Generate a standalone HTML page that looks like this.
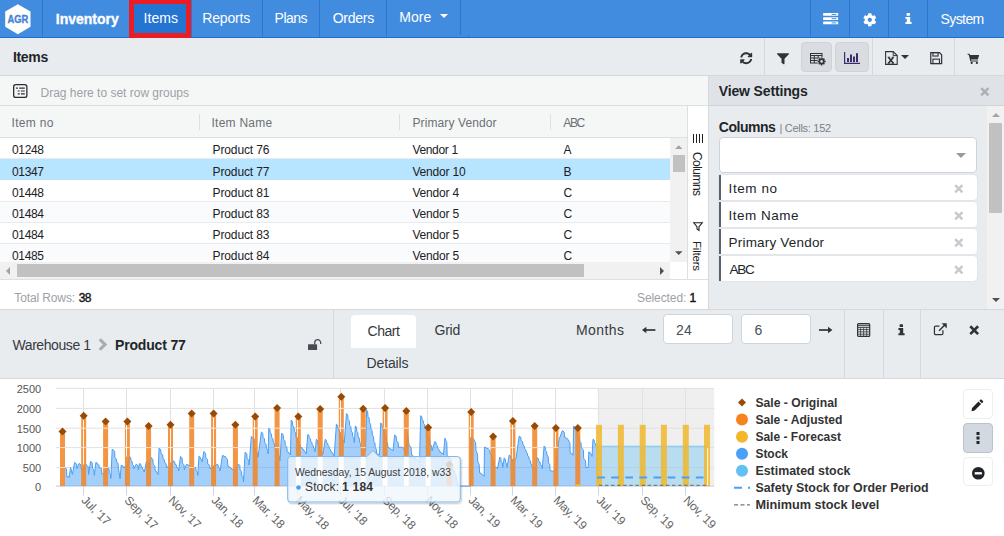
<!DOCTYPE html>
<html lang="en"><head><meta charset="utf-8"><title>Inventory - Items</title>
<style>
html,body{margin:0;padding:0}
body{width:1004px;height:536px;overflow:hidden;background:#fff;font-family:"Liberation Sans",sans-serif;}
.root,.root div{position:absolute;}
.root{position:relative;}
.t{position:absolute;white-space:nowrap;line-height:20px;}
svg{display:block;overflow:visible}
</style></head>
<body>
<div class="root" style="left:0px;top:0px;width:1004px;height:536px;background:#fff;overflow:hidden;"><div class="nav" style="left:0px;top:0px;width:1004px;height:38px;background:#428ce0;border-bottom:1px solid #1f6cd2;box-sizing:border-box;"><div style="left:4.7px;top:3.7px"><svg width="26" height="31" viewBox="0 0 26 31" style="position:absolute;left:0;top:0"><polygon points="12.900,0.200 25.500,7.600 25.500,22.800 12.900,30.300 0.200,22.800 0.200,7.600" fill="#fff"/><text x="12.900" y="18.950" text-anchor="middle" font-family="Liberation Sans, sans-serif" font-weight="700" font-size="10.400" fill="#4583d8" stroke="#4583d8" stroke-width="0.350" textLength="20.800" lengthAdjust="spacingAndGlyphs">AGR</text></svg></div><div style="left:42px;top:0px;width:1px;height:37px;background:#2d74d3;"></div>
<div style="left:191px;top:0px;width:1px;height:37px;background:#2d74d3;"></div>
<div style="left:262px;top:0px;width:1px;height:37px;background:#2d74d3;"></div>
<div style="left:319px;top:0px;width:1px;height:37px;background:#2d74d3;"></div>
<div style="left:386px;top:0px;width:1px;height:37px;background:#2d74d3;"></div>
<div style="left:460px;top:0px;width:1px;height:34.5px;background:#2d74d3;"></div>
<div style="left:810px;top:0px;width:1px;height:37px;background:#2d74d3;"></div>
<div style="left:849px;top:0px;width:1px;height:37px;background:#2d74d3;"></div>
<div style="left:888px;top:0px;width:1px;height:37px;background:#2d74d3;"></div>
<div style="left:927px;top:0px;width:1px;height:37px;background:#2d74d3;"></div>
<div style="left:468px;top:35px;width:1px;height:2px;background:#2d74d3;"></div>
<span class="t" style="left:55.8px;top:9.15px;font-size:14px;font-weight:700;color:#fff;-webkit-text-stroke:0.35px #fff;">Inventory</span><div style="left:129px;top:-1px;width:62px;height:39px;background:#2474d2;border:5px solid #ec1c24;box-sizing:border-box;"></div>
<span class="t" style="left:143.5px;top:8.15px;font-size:14px;color:#fff;letter-spacing:0.068px;">Items</span><span class="t" style="left:202.3px;top:8.15px;font-size:14px;color:#fff;letter-spacing:-0.187px;">Reports</span><span class="t" style="left:274.6px;top:8.15px;font-size:14px;color:#fff;letter-spacing:-0.505px;">Plans</span><span class="t" style="left:332.7px;top:8.15px;font-size:14px;color:#fff;letter-spacing:-0.257px;">Orders</span><span class="t" style="left:399.2px;top:7.15px;font-size:14px;color:#fff;letter-spacing:0.097px;">More</span><div style="left:440px;top:14px"><svg width="8" height="4" viewBox="0 0 8 4" style="position:absolute;left:0;top:0"><polygon points="0,0 8,0 4,4" fill="#fff"/></svg></div><span class="t" style="left:940.6px;top:9.15px;font-size:14px;color:#fff;letter-spacing:-0.603px;">System</span><div style="left:822.5px;top:13px"><svg width="15.3" height="11.3" viewBox="0 0 16 12" style="position:absolute;left:0;top:0"><rect x="0" y="0" width="16" height="3" rx="0.6" fill="#fff"/><rect x="0" y="4.5" width="16" height="3" rx="0.6" fill="#fff"/><rect x="0" y="9" width="16" height="3" rx="0.6" fill="#fff"/><rect x="9" y="1" width="5" height="1" fill="#408ade"/><rect x="9" y="5.5" width="5" height="1" fill="#408ade"/><rect x="9" y="10" width="5" height="1" fill="#408ade"/></svg></div><div style="left:862.7px;top:12.7px"><svg width="13.6" height="13.6" viewBox="0 0 512 512" style="position:absolute;left:0;top:0"><path d="M487.4 315.7l-42.6-24.6c4.3-23.2 4.3-47 0-70.2l42.6-24.6c4.9-2.8 7.1-8.600 5.500-14-11.100-35.600-30-67.800-54.700-94.600-3.800-4.100-10-5.100-14.800-2.300L380.800 110c-17.900-15.400-38.500-27.300-60.800-35.100V25.800c0-5.600-3.900-10.500-9.400-11.700-36.700-8.200-74.300-7.800-109.200 0-5.500 1.200-9.400 6.100-9.400 11.700V75c-22.200 7.900-42.800 19.800-60.800 35.100L88.700 85.500c-4.900-2.800-11-1.900-14.800 2.300-24.700 26.700-43.600 58.900-54.700 94.600-1.700 5.400.6 11.200 5.500 14L67.300 221c-4.300 23.200-4.300 47 0 70.200l-42.600 24.600c-4.900 2.800-7.100 8.600-5.500 14 11.100 35.600 30 67.800 54.700 94.600 3.800 4.100 10 5.100 14.800 2.300l42.600-24.600c17.900 15.400 38.500 27.300 60.800 35.100v49.200c0 5.600 3.900 10.500 9.400 11.700 36.700 8.200 74.300 7.800 109.200 0 5.500-1.200 9.400-6.100 9.400-11.700v-49.200c22.200-7.900 42.800-19.800 60.800-35.100l42.600 24.600c4.900 2.800 11 1.900 14.800-2.300 24.700-26.700 43.600-58.900 54.700-94.600 1.500-5.500-.7-11.300-5.600-14.100zM256 336c-44.100 0-80-35.900-80-80s35.900-80 80-80 80 35.900 80 80-35.900 80-80 80z" fill="#fff"/></svg></div><div style="left:905.2px;top:13.1px"><svg width="7" height="11" viewBox="0 0 7 11" style="position:absolute;left:0;top:0"><rect x="1.600" y="0" width="3.400" height="2.800" rx="0.500" fill="#fff"/><path d="M0.400 3.900h4.800v5.200h1.400v1.900h-6.200v-1.900h1.400v-3.300h-1.400z" fill="#fff"/></svg></div></div>
<div class="titlebar" style="left:0px;top:38px;width:1004px;height:38px;background:#e9ecef;border-bottom:1px solid #d5d9dd;box-sizing:border-box;"><span class="t" style="left:13px;top:9.15px;font-size:14px;font-weight:700;color:#212529;letter-spacing:-0.347px;">Items</span><div style="left:764px;top:0px;width:1px;height:37px;background:#d5d9dd;"></div>
<div style="left:872px;top:0px;width:1px;height:37px;background:#d5d9dd;"></div>
<div style="left:954px;top:0px;width:1px;height:37px;background:#d5d9dd;"></div>
<div style="left:801px;top:4px;width:30.5px;height:29.5px;background:#d9dde2;border:1px solid #ced3d9;border-radius:4px;box-sizing:border-box;"></div>
<div style="left:835px;top:4px;width:34px;height:29.5px;background:#d9dde2;border:1px solid #ced3d9;border-radius:4px;box-sizing:border-box;"></div>
<div style="left:739.8px;top:13.7px"><svg width="12.4" height="12.4" viewBox="0 0 512 512" style="position:absolute;left:0;top:0"><path fill="#30343a" d="M370.720 133.280C339.458 104.008 298.888 87.962 255.848 88c-77.458.068-144.328 53.178-162.791 126.850-1.344 5.363-6.122 9.150-11.651 9.150H24.103c-7.498 0-13.194-6.807-11.807-14.176C33.933 94.924 134.813 8 256 8c66.448 0 126.791 26.136 171.315 68.685L463.030 40.970C478.149 25.851 504 36.559 504 57.941V192c0 13.255-10.745 24-24 24H345.941c-21.382 0-32.090-25.851-16.971-40.971l41.750-41.749zM32 296h134.059c21.382 0 32.090 25.851 16.971 40.971l-41.750 41.750c31.262 29.273 71.835 45.319 114.876 45.280 77.418-.07 144.315-53.144 162.787-126.849 1.344-5.363 6.122-9.150 11.651-9.150h57.304c7.498 0 13.194 6.807 11.807 14.176C478.067 417.076 377.187 504 256 504c-66.448 0-126.791-26.136-171.315-68.685L48.970 471.030C33.851 486.149 8 475.441 8 454.059V320c0-13.255 10.745-24 24-24z"/></svg></div><div style="left:777.3px;top:14.6px"><svg width="12" height="11.6" viewBox="0 0 12 11" style="position:absolute;left:0;top:0"><path fill="#30343a" d="M0.600 0h10.800c.5 0 .8.600.4 1L7.500 5.500V10.400c0 .5-.5.700-.9.500L4.800 9.600c-.200-.100-.300-.300-.300-.500V5.500L.2 1C-.2.600.100 0 .6 0z"/></svg></div><div style="left:809.8px;top:14.7px"><svg width="16" height="13" viewBox="0 0 16 13" style="position:absolute;left:0;top:0"><g fill="none" stroke="#30343a" stroke-width="1"><rect x="0.500" y="0.500" width="11.500" height="9.500"/><path d="M0.500 2.500h11.500M0.500 5h11.500M0.500 7.500h8M4.300 2.500v7.500M8.200 2.500v5"/></g><circle cx="11.600" cy="8.400" r="4.300" fill="#d9dde2"/><circle cx="11.600" cy="8.400" r="2.200" fill="none" stroke="#30343a" stroke-width="1.700"/><g stroke="#30343a" stroke-width="1.500"><path d="M11.600 4.400v1.400M11.600 11v1.400M7.600 8.400h1.400M14.200 8.400h1.400M8.800 5.600l1 1M13.400 10.200l1 1M8.800 11.200l1-1M13.400 6.600l1-1"/></g></svg></div><div style="left:844px;top:14px"><svg width="16" height="12" viewBox="0 0 16 12" style="position:absolute;left:0;top:0"><path d="M0.600 0v11.300h15.400" fill="none" stroke="#3b2d6b" stroke-width="1.200"/><g fill="#3b2d6b"><rect x="3" y="6" width="2" height="4"/><rect x="6" y="2.500" width="2" height="7.500"/><rect x="9" y="4.500" width="2" height="5.500"/><rect x="12" y="1.200" width="2" height="8.800"/></g></svg></div><div style="left:884.8px;top:12.8px"><svg width="13" height="14" viewBox="0 0 13 14" style="position:absolute;left:0;top:0"><path d="M0.600 0.600h7.600l4 4v8.800h-11.600z" fill="none" stroke="#30343a" stroke-width="1.100"/><path d="M8.200 0.600v4h4" fill="none" stroke="#30343a" stroke-width="1"/><path d="M3.400 6.200l5 6M8.400 6.200l-5 6" stroke="#30343a" stroke-width="1.700"/><path d="M2.600 6.200h2.600M6.600 6.200h2.600M2.600 12.200h2.600M6.600 12.200h2.600" stroke="#30343a" stroke-width="0.800"/></svg></div><div style="left:901.2px;top:17px"><svg width="8" height="4.200" viewBox="0 0 8 4" style="position:absolute;left:0;top:0"><polygon points="0,0 8,0 4,4" fill="#30343a"/></svg></div><div style="left:929.7px;top:14px"><svg width="12.4" height="12.2" viewBox="0 0 13 13" style="position:absolute;left:0;top:0"><path d="M0.700 0.700h9.300l2.300 2.300v9.300h-11.600z" fill="none" stroke="#30343a" stroke-width="1.300"/><rect x="3" y="0.700" width="5.500" height="3.600" fill="none" stroke="#30343a" stroke-width="1.200"/><rect x="3" y="7.600" width="7" height="4.700" fill="none" stroke="#30343a" stroke-width="1.200"/></svg></div><div style="left:967px;top:14.8px"><svg width="13.200" height="11.200" viewBox="0 0 14 13" style="position:absolute;left:0;top:0"><path d="M0 0.800h2.400l.5 1.400h10.600l-1.500 5.300h-7.900l.3 1.200h7.600v1.300h-8.700l-2-7.900h-1.300z" fill="#30343a"/><circle cx="4.800" cy="11.600" r="1.300" fill="#30343a"/><circle cx="10.800" cy="11.600" r="1.300" fill="#30343a"/></svg></div></div>
<div class="grid" style="left:0px;top:76px;width:708px;height:234px;background:#fff;"><div style="left:0px;top:0px;width:708px;height:30px;background:#f5f7f7;border-bottom:1px solid #dcdfe3;box-sizing:border-box;"><div style="left:12.7px;top:7.9px"><svg width="14.5" height="14" viewBox="0 0 14.5 14" style="position:absolute;left:0;top:0"><rect x="0.650" y="0.650" width="13.200" height="12.700" rx="2.200" fill="none" stroke="#2b2f33" stroke-width="1.300"/><path d="M2.900 4.200h2M6.200 4.200h5.600M4.700 7h2M7.900 7h3.900M4.700 9.800h2M7.900 9.800h3.900" stroke="#2b2f33" stroke-width="1.200"/></svg></div><span class="t" style="left:40.5px;top:7.04px;font-size:12px;color:#9da1a6;letter-spacing:-0.009px;">Drag here to set row groups</span></div>
<div style="left:0px;top:30px;width:687px;height:32px;background:#f5f7f7;border-bottom:1px solid #dcdfe3;box-sizing:border-box;"><span class="t" style="left:11.5px;top:7.04px;font-size:12px;color:#6c7075;letter-spacing:0.326px;">Item no</span><span class="t" style="left:211.5px;top:7.04px;font-size:12px;color:#6c7075;letter-spacing:0.249px;">Item Name</span><span class="t" style="left:412.5px;top:7.04px;font-size:12px;color:#6c7075;letter-spacing:0.107px;">Primary Vendor</span><span class="t" style="left:563.3px;top:7.04px;font-size:12px;color:#6c7075;letter-spacing:-1.404px;">ABC</span><div style="left:199px;top:8px;width:1px;height:16px;background:#dcdfe3;"></div>
<div style="left:399px;top:8px;width:1px;height:16px;background:#dcdfe3;"></div>
<div style="left:550px;top:8px;width:1px;height:16px;background:#dcdfe3;"></div>
</div>
<div style="left:0px;top:62px;width:670px;height:124px;overflow:hidden;"><div style="left:0px;top:0px;width:670px;height:21px;background:#fff;border-bottom:1px solid #e8eaed;box-sizing:border-box;"><span class="t" style="left:12px;top:2.04px;font-size:12px;color:#1d2125;letter-spacing:-0.349px;">01248</span><span class="t" style="left:212.5px;top:2.04px;font-size:12px;color:#1d2125;letter-spacing:-0.118px;">Product 76</span><span class="t" style="left:412.4px;top:2.04px;font-size:12px;color:#1d2125;letter-spacing:-0.338px;">Vendor 1</span><span class="t" style="left:563.5px;top:2.04px;font-size:12px;color:#1d2125;">A</span></div>
<div style="left:0px;top:21px;width:670px;height:21px;background:#b7e4ff;border-bottom:1px solid #b7e4ff;box-sizing:border-box;"><span class="t" style="left:12px;top:3.04px;font-size:12px;color:#1d2125;letter-spacing:-0.349px;">01347</span><span class="t" style="left:212.5px;top:3.04px;font-size:12px;color:#1d2125;letter-spacing:-0.118px;">Product 77</span><span class="t" style="left:412.4px;top:3.04px;font-size:12px;color:#1d2125;letter-spacing:-0.193px;">Vendor 10</span><span class="t" style="left:563.5px;top:3.04px;font-size:12px;color:#1d2125;letter-spacing:-2.0px;">B</span></div>
<div style="left:0px;top:42px;width:670px;height:22px;background:#fff;border-bottom:1px solid #e8eaed;box-sizing:border-box;"><span class="t" style="left:12px;top:3.04px;font-size:12px;color:#1d2125;letter-spacing:-0.349px;">01448</span><span class="t" style="left:212.5px;top:3.04px;font-size:12px;color:#1d2125;letter-spacing:-0.118px;">Product 81</span><span class="t" style="left:412.4px;top:3.04px;font-size:12px;color:#1d2125;letter-spacing:-0.195px;">Vendor 4</span><span class="t" style="left:563.5px;top:3.04px;font-size:12px;color:#1d2125;letter-spacing:-2.0px;">C</span></div>
<div style="left:0px;top:64px;width:670px;height:21px;background:#fafbfc;border-bottom:1px solid #e8eaed;box-sizing:border-box;"><span class="t" style="left:12px;top:2.04px;font-size:12px;color:#1d2125;letter-spacing:-0.349px;">01484</span><span class="t" style="left:212.5px;top:2.04px;font-size:12px;color:#1d2125;letter-spacing:-0.118px;">Product 83</span><span class="t" style="left:412.4px;top:2.04px;font-size:12px;color:#1d2125;letter-spacing:-0.195px;">Vendor 5</span><span class="t" style="left:563.5px;top:2.04px;font-size:12px;color:#1d2125;letter-spacing:-2.0px;">C</span></div>
<div style="left:0px;top:85px;width:670px;height:21px;background:#fff;border-bottom:1px solid #e8eaed;box-sizing:border-box;"><span class="t" style="left:12px;top:2.04px;font-size:12px;color:#1d2125;letter-spacing:-0.349px;">01484</span><span class="t" style="left:212.5px;top:2.04px;font-size:12px;color:#1d2125;letter-spacing:-0.118px;">Product 83</span><span class="t" style="left:412.4px;top:2.04px;font-size:12px;color:#1d2125;letter-spacing:-0.195px;">Vendor 5</span><span class="t" style="left:563.5px;top:2.04px;font-size:12px;color:#1d2125;letter-spacing:-2.0px;">C</span></div>
<div style="left:0px;top:106px;width:670px;height:21px;background:#fafbfc;border-bottom:1px solid #e8eaed;box-sizing:border-box;"><span class="t" style="left:12px;top:2.04px;font-size:12px;color:#1d2125;letter-spacing:-0.349px;">01485</span><span class="t" style="left:212.5px;top:2.04px;font-size:12px;color:#1d2125;letter-spacing:-0.118px;">Product 84</span><span class="t" style="left:412.4px;top:2.04px;font-size:12px;color:#1d2125;letter-spacing:-0.195px;">Vendor 5</span><span class="t" style="left:563.5px;top:2.04px;font-size:12px;color:#1d2125;letter-spacing:-2.0px;">C</span></div>
</div>
<div style="left:670px;top:62px;width:17px;height:124px;background:#f1f1f1;"><div style="left:4.8px;top:7px"><svg width="7.5" height="4" viewBox="0 0 8 4" style="position:absolute;left:0;top:0"><polygon points="0,4 8,4 4,0" fill="#a3a3a3"/></svg></div><div style="left:4.8px;top:112.5px"><svg width="7.5" height="4" viewBox="0 0 8 4" style="position:absolute;left:0;top:0"><polygon points="0,0 8,0 4,4" fill="#505050"/></svg></div><div style="left:2.5px;top:17px;width:12px;height:16.5px;background:#c1c1c1;"></div>
</div>
<div style="left:0px;top:186px;width:670px;height:17px;background:#f1f1f1;"><div style="left:5.8px;top:4.6px"><svg width="4" height="8" viewBox="0 0 4 8" style="position:absolute;left:0;top:0"><polygon points="4,0 4,8 0,4" fill="#a3a3a3"/></svg></div><div style="left:660px;top:4.6px"><svg width="4" height="8" viewBox="0 0 4 8" style="position:absolute;left:0;top:0"><polygon points="0,0 0,8 4,4" fill="#505050"/></svg></div><div style="left:16.5px;top:2px;width:567px;height:12.7px;background:#c1c1c1;"></div>
</div>
<div style="left:687px;top:30px;width:21px;height:173px;background:#fff;border-left:1px solid #dcdfe3;box-sizing:border-box;"><div style="left:5px;top:28px"><svg width="11" height="9" viewBox="0 0 11 9" style="position:absolute;left:0;top:0"><path d="M0.500 0v9M3.500 0v9M6.500 0v9M9.500 0v9" stroke="#1d2125" stroke-width="1"/></svg></div><span class="t" style="left:19.06px;top:46.2px;transform-origin:0 0;transform:rotate(90deg);font-size:12px;color:#1d2125;letter-spacing:-0.558px;">Columns</span><div style="left:5px;top:116px"><svg width="10" height="10" viewBox="0 0 11 11" style="position:absolute;left:0;top:0"><path d="M0.800 0.800h9.400l-3.600 4.400v4l-2.200-1.500v-2.500z" fill="none" stroke="#1d2125" stroke-width="1.200"/></svg></div><span class="t" style="left:18.98px;top:134.6px;transform-origin:0 0;transform:rotate(90deg);font-size:11.5px;color:#1d2125;letter-spacing:-0.209px;">Filters</span></div>
<div style="left:0px;top:203px;width:708px;height:31px;background:#fff;border-top:1px solid #dcdfe3;border-bottom:1px solid #d5d9dd;box-sizing:border-box;"><span class="t" style="left:14.3px;top:8.34px;font-size:12px;color:#9da1a6;letter-spacing:-0.119px;">Total Rows:</span><span class="t" style="left:78.7px;top:8.34px;font-size:12px;color:#14181c;-webkit-text-stroke:0.4px #14181c;letter-spacing:-0.6px;">38</span><span class="t" style="left:637px;top:8.34px;font-size:12px;color:#9da1a6;letter-spacing:-0.087px;">Selected:</span><span class="t" style="left:689.5px;top:8.34px;font-size:12px;color:#14181c;letter-spacing:-2.5px;-webkit-text-stroke:0.45px #14181c;">1</span></div>
</div>
<div class="panel" style="left:708px;top:76px;width:296px;height:234px;background:#e9ecef;border-left:1px solid #d5d9dd;border-bottom:1px solid #d5d9dd;box-sizing:border-box;"><div style="left:0px;top:0px;width:295px;height:30px;background:#dfe3e8;border-bottom:1px solid #d0d4d9;box-sizing:border-box;"><span class="t" style="left:9.8px;top:5.35px;font-size:14px;font-weight:700;color:#212529;letter-spacing:-0.148px;">View Settings</span><div style="left:270.6px;top:10.5px"><svg width="9.6" height="9.6" viewBox="0 0 9 9" style="position:absolute;left:0;top:0"><path d="M1.100 1.100l6.800 6.800M7.900 1.100l-6.800 6.800" stroke="#adb1b6" stroke-width="2.300"/></svg></div></div>
<span class="t" style="left:9.8px;top:41.35px;font-size:14px;font-weight:700;color:#212529;letter-spacing:-0.484px;">Columns</span><span class="t" style="left:70.5px;top:42.19px;font-size:11px;color:#7b8085;letter-spacing:-0.292px;">| Cells: 152</span><div style="left:10px;top:61px;width:258px;height:36px;background:#fff;border:1px solid #ced4da;border-radius:4px;box-sizing:border-box;"><div style="left:235.8px;top:15px"><svg width="10" height="5" viewBox="0 0 10 5" style="position:absolute;left:0;top:0"><polygon points="0,0 10,0 5,5" fill="#999"/></svg></div></div>
<div style="left:10px;top:99.2px;width:258px;height:25px;background:#fff;border-left:2px solid #5a636c;border-radius:0 4px 4px 0;box-sizing:border-box;box-shadow:0 0 0 1px #e2e5e9;"><span class="t" style="left:7.6px;top:3.52px;font-size:13.5px;color:#212529;letter-spacing:0.581px;">Item no</span><div style="left:232.6px;top:8.4px"><svg width="9.6" height="9.6" viewBox="0 0 9 9" style="position:absolute;left:0;top:0"><path d="M1.100 1.100l6.800 6.800M7.900 1.100l-6.800 6.800" stroke="#c6c9cd" stroke-width="2.300"/></svg></div></div>
<div style="left:10px;top:126.25px;width:258px;height:25px;background:#fff;border-left:2px solid #5a636c;border-radius:0 4px 4px 0;box-sizing:border-box;box-shadow:0 0 0 1px #e2e5e9;"><span class="t" style="left:7.6px;top:3.52px;font-size:13.5px;color:#212529;letter-spacing:0.499px;">Item Name</span><div style="left:232.6px;top:8.4px"><svg width="9.6" height="9.6" viewBox="0 0 9 9" style="position:absolute;left:0;top:0"><path d="M1.100 1.100l6.800 6.800M7.900 1.100l-6.800 6.800" stroke="#c6c9cd" stroke-width="2.300"/></svg></div></div>
<div style="left:10px;top:153.3px;width:258px;height:25px;background:#fff;border-left:2px solid #5a636c;border-radius:0 4px 4px 0;box-sizing:border-box;box-shadow:0 0 0 1px #e2e5e9;"><span class="t" style="left:7.6px;top:3.52px;font-size:13.5px;color:#212529;letter-spacing:0.189px;">Primary Vendor</span><div style="left:232.6px;top:8.4px"><svg width="9.6" height="9.6" viewBox="0 0 9 9" style="position:absolute;left:0;top:0"><path d="M1.100 1.100l6.800 6.800M7.900 1.100l-6.800 6.800" stroke="#c6c9cd" stroke-width="2.300"/></svg></div></div>
<div style="left:10px;top:180.35px;width:258px;height:25px;background:#fff;border-left:2px solid #5a636c;border-radius:0 4px 4px 0;box-sizing:border-box;box-shadow:0 0 0 1px #e2e5e9;"><span class="t" style="left:8.6px;top:3.52px;font-size:13.5px;color:#212529;letter-spacing:-1.254px;">ABC</span><div style="left:232.6px;top:8.4px"><svg width="9.6" height="9.6" viewBox="0 0 9 9" style="position:absolute;left:0;top:0"><path d="M1.100 1.100l6.800 6.800M7.900 1.100l-6.800 6.800" stroke="#c6c9cd" stroke-width="2.300"/></svg></div></div>
<div style="left:278px;top:30px;width:17px;height:203px;background:#f1f1f1;"><div style="left:4.5px;top:7px"><svg width="8" height="4" viewBox="0 0 8 4" style="position:absolute;left:0;top:0"><polygon points="0,4 8,4 4,0" fill="#a3a3a3"/></svg></div><div style="left:4.5px;top:191.5px"><svg width="8" height="4" viewBox="0 0 8 4" style="position:absolute;left:0;top:0"><polygon points="0,0 8,0 4,4" fill="#505050"/></svg></div><div style="left:2px;top:17px;width:13px;height:89.5px;background:#c1c1c1;"></div>
</div>
</div>
<div class="detailhdr" style="left:0px;top:310px;width:1004px;height:69px;background:#e9ecef;border-bottom:1px solid #d5d9dd;box-sizing:border-box;"><div style="left:333px;top:0px;width:1px;height:69px;background:#d5d9dd;"></div>
<div style="left:844.3px;top:0px;width:1px;height:69px;background:#d5d9dd;"></div>
<div style="left:883px;top:0px;width:1px;height:69px;background:#d5d9dd;"></div>
<div style="left:920px;top:0px;width:1px;height:69px;background:#d5d9dd;"></div>
<span class="t" style="left:12.5px;top:25.45px;font-size:14px;color:#343a40;letter-spacing:-0.426px;">Warehouse 1</span><div style="left:97.8px;top:27.8px"><svg width="8.800" height="13" viewBox="0 0 8 13" preserveAspectRatio="none" style="position:absolute;left:0;top:0"><path d="M1.600 1.200l4.800 5.300-4.800 5.300" fill="none" stroke="#a9adb2" stroke-width="3"/></svg></div><span class="t" style="left:115px;top:25.45px;font-size:14px;font-weight:700;color:#212529;letter-spacing:-0.174px;">Product 77</span><div style="left:307.9px;top:28.7px"><svg width="14" height="12" viewBox="0 0 14 12" style="position:absolute;left:0;top:0"><rect x="0" y="5.300" width="9.100" height="5.800" rx="0.600" fill="#454c54"/><path d="M6.700 5.300v-1.600a3 3 0 0 1 6 0v1.400" fill="none" stroke="#454c54" stroke-width="1.250"/></svg></div><div style="left:350.8px;top:5px;width:65.2px;height:33px;background:#fff;border-radius:4px 4px 0 0;"></div>
<span class="t" style="left:367.5px;top:11.45px;font-size:14px;color:#343a40;letter-spacing:-0.461px;">Chart</span><span class="t" style="left:434.5px;top:10.45px;font-size:14px;color:#343a40;letter-spacing:-0.221px;">Grid</span><span class="t" style="left:366.5px;top:43.45px;font-size:14px;color:#343a40;letter-spacing:-0.132px;">Details</span><span class="t" style="left:576px;top:10.45px;font-size:14px;color:#343a40;letter-spacing:0.418px;">Months</span><div style="left:641.6px;top:16.2px"><svg width="13.4" height="8" viewBox="0 0 13.4 8" style="position:absolute;left:0;top:0;transform:scaleX(-1);"><path d="M0 4h11" fill="none" stroke="#30343a" stroke-width="1.700"/><polygon points="9,0.800 13.400,4 9,7.200" fill="#30343a"/></svg></div><div style="left:819px;top:16.2px"><svg width="13.4" height="8" viewBox="0 0 13.4 8" style="position:absolute;left:0;top:0;"><path d="M0 4h11" fill="none" stroke="#30343a" stroke-width="1.700"/><polygon points="9,0.800 13.400,4 9,7.200" fill="#30343a"/></svg></div><div style="left:663px;top:4px;width:69.5px;height:29.5px;background:#fff;border:1px solid #ced4da;border-radius:4px;box-sizing:border-box;"></div>
<span class="t" style="left:676px;top:10.45px;font-size:14px;color:#495057;letter-spacing:0.214px;">24</span><div style="left:741px;top:4px;width:69.5px;height:29.5px;background:#fff;border:1px solid #ced4da;border-radius:4px;box-sizing:border-box;"></div>
<span class="t" style="left:754.5px;top:10.45px;font-size:14px;color:#495057;letter-spacing:-0.5px;">6</span><div style="left:857px;top:13px"><svg width="13.3" height="14" viewBox="0 0 13.3 14" style="position:absolute;left:0;top:0"><rect x="0.600" y="0.600" width="12.100" height="12.800" rx="1" fill="none" stroke="#30343a" stroke-width="1.200"/><path d="M0.600 2.300h12.100M0.600 4.300h12.100" stroke="#30343a" stroke-width="1"/><path d="M0.600 6.600h12.100M0.600 8.900h12.100M0.600 11.200h12.100M3.600 4.300v9M6.650 4.300v9M9.700 4.300v9" stroke="#30343a" stroke-width="0.800"/></svg></div><div style="left:898.3px;top:13.7px"><svg width="7" height="11.400" viewBox="0 0 7 11" style="position:absolute;left:0;top:0"><rect x="1.600" y="0" width="3.400" height="2.800" rx="0.500" fill="#30343a"/><path d="M0.400 3.900h4.800v5.200h1.400v1.900h-6.200v-1.900h1.400v-3.300h-1.400z" fill="#30343a"/></svg></div><div style="left:932.7px;top:12.8px"><svg width="15" height="12.500" viewBox="0 0 14 13" style="position:absolute;left:0;top:0"><path d="M9.500 7.500v3.300a1.200 1.200 0 0 1-1.200 1.200h-6.400a1.200 1.200 0 0 1-1.200-1.200v-6.400a1.200 1.200 0 0 1 1.200-1.200h4" fill="none" stroke="#30343a" stroke-width="1.300"/><path d="M5.500 8l6.700-6.700" stroke="#30343a" stroke-width="1.600"/><polygon points="8.200,0.300 13.500,0.300 13.500,5.600" fill="#30343a"/></svg></div><div style="left:968.7px;top:15.2px"><svg width="10.4" height="10.4" viewBox="0 0 9 9" style="position:absolute;left:0;top:0"><path d="M1.100 1.100l6.800 6.800M7.900 1.100l-6.800 6.800" stroke="#30343a" stroke-width="2.300"/></svg></div></div>
<div class="chart" style="left:0px;top:379px;width:1004px;height:157px;background:#fff;"><div style="left:0px;top:0px"><svg width="1004" height="157" viewBox="0 379 1004 157" style="position:absolute;left:0;top:0" font-family="Liberation Sans, sans-serif"><rect x="597.8" y="388.4" width="116.400" height="97.700" fill="#efefef"/><path d="M56 486.10H714.200" stroke="#e1e1e1" stroke-width="1"/><path d="M56 467.50H714.200" stroke="#e1e1e1" stroke-width="1"/><path d="M56 447.60H714.200" stroke="#e1e1e1" stroke-width="1"/><path d="M56 428.20H714.200" stroke="#e1e1e1" stroke-width="1"/><path d="M56 408.40H714.200" stroke="#e1e1e1" stroke-width="1"/><path d="M56 388.35H714.200" stroke="#e1e1e1" stroke-width="1"/><path d="M83.5 388.400V486" stroke="#e1e1e1" stroke-width="1"/><path d="M83.5 486V495.500" stroke="#ccd6eb" stroke-width="1"/><path d="M126.5 388.400V486" stroke="#e1e1e1" stroke-width="1"/><path d="M126.5 486V495.500" stroke="#ccd6eb" stroke-width="1"/><path d="M170.5 388.400V486" stroke="#e1e1e1" stroke-width="1"/><path d="M170.5 486V495.500" stroke="#ccd6eb" stroke-width="1"/><path d="M213.5 388.400V486" stroke="#e1e1e1" stroke-width="1"/><path d="M213.5 486V495.500" stroke="#ccd6eb" stroke-width="1"/><path d="M254.5 388.400V486" stroke="#e1e1e1" stroke-width="1"/><path d="M254.5 486V495.500" stroke="#ccd6eb" stroke-width="1"/><path d="M297.5 388.400V486" stroke="#e1e1e1" stroke-width="1"/><path d="M297.5 486V495.500" stroke="#ccd6eb" stroke-width="1"/><path d="M340.5 388.400V486" stroke="#e1e1e1" stroke-width="1"/><path d="M340.5 486V495.500" stroke="#ccd6eb" stroke-width="1"/><path d="M384.5 388.400V486" stroke="#e1e1e1" stroke-width="1"/><path d="M384.5 486V495.500" stroke="#ccd6eb" stroke-width="1"/><path d="M427.5 388.400V486" stroke="#e1e1e1" stroke-width="1"/><path d="M427.5 486V495.500" stroke="#ccd6eb" stroke-width="1"/><path d="M470.5 388.400V486" stroke="#e1e1e1" stroke-width="1"/><path d="M470.5 486V495.500" stroke="#ccd6eb" stroke-width="1"/><path d="M512.5 388.400V486" stroke="#e1e1e1" stroke-width="1"/><path d="M512.5 486V495.500" stroke="#ccd6eb" stroke-width="1"/><path d="M555.5 388.400V486" stroke="#e1e1e1" stroke-width="1"/><path d="M555.5 486V495.500" stroke="#ccd6eb" stroke-width="1"/><path d="M598.5 388.400V486" stroke="#e1e1e1" stroke-width="1"/><path d="M598.5 486V495.500" stroke="#ccd6eb" stroke-width="1"/><path d="M642.5 388.400V486" stroke="#e1e1e1" stroke-width="1"/><path d="M642.5 486V495.500" stroke="#ccd6eb" stroke-width="1"/><path d="M685.5 388.400V486" stroke="#e1e1e1" stroke-width="1"/><path d="M685.5 486V495.500" stroke="#ccd6eb" stroke-width="1"/><path d="M56 486.100H714.200" stroke="#ccd6eb" stroke-width="1"/><path d="M64.6 467.5L66.5 469.0L66.8 476.5L68.7 476.8L69.0 477.7L70.6 467.5L72.4 474.4L74.6 462.4L76.6 464.0L76.9 468.7L79.1 463.4L81.0 465.0L81.3 469.7L83.5 468.5L85.8 464.2L88.2 466.7L88.5 474.4L90.7 461.3L92.2 463.0L92.5 468.3L94.0 470.1L94.3 475.3L95.9 462.4L97.2 463.0L97.6 464.5L98.9 465.0L99.2 467.5L101.6 468.5L101.9 474.4L104.0 473.2L105.5 470.5L107.8 467.5L109.0 468.9L109.3 472.9L110.6 474.2L110.9 478.3L112.2 449.2L114.6 451.3L114.9 457.6L116.2 458.7L116.6 462.1L118.0 463.2L118.3 467.5L120.1 478.7L121.2 465.4L122.8 465.7L123.1 467.5L124.7 466.8L125.0 467.7L127.2 465.8L129.5 456.4L130.6 457.4L131.0 460.5L132.1 461.5L132.4 464.6L133.6 465.6L133.9 468.7L136.2 464.2L138.1 465.6L138.4 469.9L139.5 463.4L140.7 464.1L141.0 466.3L142.2 467.0L142.5 469.2L143.7 469.9L144.0 472.0L145.1 468.7L146.3 461.9L148.7 463.0L149.0 467.5L151.2 457.6L152.8 459.2L153.2 464.2L154.8 465.9L155.2 470.9L156.3 471.3L156.6 472.6L157.8 473.1L158.1 474.4L159.0 448.2L160.7 449.5L161.0 453.5L162.7 454.8L163.0 458.7L164.3 459.7L164.7 462.6L166.1 463.6L166.4 467.5L168.0 466.7L168.3 467.1L169.8 467.3L170.2 467.7L173.1 460.9L174.6 461.7L175.0 464.2L176.5 465.0L176.8 467.5L178.3 468.4L178.7 470.9L180.5 456.4L182.1 458.1L182.4 463.1L184.0 464.8L184.3 469.9L186.6 464.2L187.7 464.5L188.1 465.2L189.2 465.5L189.5 466.3L190.7 467.5L191.0 467.3L194.4 467.5L195.8 467.6L196.1 470.9L197.5 472.0L197.8 475.3L198.9 456.4L200.2 457.1L200.6 459.1L201.8 459.8L202.2 461.9L203.8 451.5L205.5 453.1L205.8 457.9L207.5 459.4L207.8 464.2L209.7 465.3L210.0 468.7L213.0 467.7L216.8 464.2L218.1 465.0L218.4 467.5L219.8 468.4L220.1 470.9L222.4 455.6L223.8 455.8L224.1 456.5L225.5 456.7L225.8 457.4L227.5 459.6L227.8 466.2L229.0 466.4L229.3 467.3L230.5 467.5L230.8 468.4L232.0 468.7L232.3 469.5L233.4 469.6L233.8 470.0L234.8 470.1L235.2 470.5L238.4 464.0L239.8 465.5L240.1 469.9L241.5 471.4L241.8 475.9L243.2 477.4L243.5 481.8L245.1 452.1L246.8 453.7L247.1 458.5L248.8 460.1L249.1 465.0L251.3 436.4L253.7 439.1L254.0 447.6L255.7 448.3L256.0 452.1L257.6 453.4L258.0 457.2L261.4 431.9L262.7 433.3L263.1 437.4L264.4 438.8L264.8 442.9L266.1 444.3L266.4 448.4L267.8 449.7L268.1 453.8L268.8 428.2L269.9 429.4L270.3 432.9L271.4 434.1L271.8 437.6L272.9 438.8L273.3 442.3L274.4 443.5L274.8 447.6L276.0 448.0L276.4 450.9L277.6 451.9L277.9 454.8L279.1 455.8L279.5 458.7L280.0 460.7L281.6 433.1L283.1 434.7L283.5 439.3L285.0 440.9L285.3 445.5L286.8 447.0L287.2 451.7L288.5 452.1L288.9 453.3L290.1 453.6L290.5 454.8L291.2 420.0L292.4 421.5L292.8 425.8L294.0 427.2L294.4 431.5L295.6 432.9L296.0 437.2L297.2 438.0L297.5 440.5L298.7 441.3L299.1 443.7L300.2 444.6L300.6 447.6L302.1 447.6L302.5 449.3L304.0 449.9L304.3 451.7L305.8 452.3L306.2 454.0L307.8 434.5L308.9 435.3L309.3 437.9L310.4 438.8L310.7 441.4L311.8 442.2L312.2 444.8L313.3 445.7L313.6 448.3L314.8 449.1L315.1 451.7L316.3 439.4L317.8 440.8L318.1 445.1L319.6 446.6L320.0 450.9L321.1 451.3L321.5 452.5L322.6 452.9L323.0 454.0L325.2 439.4L326.2 440.1L326.6 442.5L327.6 443.2L328.0 445.5L329.0 446.3L329.4 448.6L330.4 449.4L330.8 451.7L332.1 452.2L332.5 453.8L333.8 454.4L334.2 456.0L336.4 424.1L337.5 425.2L337.9 428.5L339.0 429.6L339.4 432.9L340.5 434.0L340.9 437.2L342.2 438.0L342.5 440.2L343.8 440.9L344.2 443.1L346.5 413.6L347.7 415.0L348.1 419.4L349.3 420.9L349.6 425.2L350.8 426.7L351.2 431.0L352.4 432.5L352.7 436.9L353.9 438.3L354.3 442.7L355.4 425.9L356.4 427.2L356.8 431.3L357.8 432.6L358.2 436.6L359.2 438.0L359.6 442.0L360.6 443.4L361.0 447.4L362.1 447.7L362.5 448.6L363.6 448.9L364.0 449.7L365.1 450.0L365.5 450.9L366.6 410.2L367.7 411.8L368.0 416.5L369.1 418.0L369.5 422.7L370.6 424.3L370.9 428.9L372.0 430.5L372.4 435.2L373.5 436.7L373.8 441.4L374.9 442.9L375.3 447.6L376.3 449.2L376.7 453.8L377.8 454.0L378.1 454.3L379.1 454.5L379.5 454.8L380.7 423.0L381.8 424.0L382.1 427.1L383.2 428.1L383.6 431.2L384.6 432.2L385.0 435.3L386.1 436.8L386.4 441.3L387.5 442.8L387.9 447.4L389.2 447.7L389.6 448.6L390.9 448.9L391.3 449.7L392.6 450.0L393.0 450.9L394.6 434.9L396.2 436.4L396.6 440.9L398.1 442.5L398.5 447.6L400.1 447.0L400.4 447.2L402.0 447.2L402.4 447.4L403.8 448.1L404.2 450.1L405.6 450.8L406.0 452.9L407.4 432.7L409.0 445.0L411.1 447.5L411.5 454.8L412.7 455.2L413.0 456.3L414.2 456.7L414.6 457.8L415.7 458.1L416.1 459.2L417.2 459.6L417.6 460.7L419.5 462.6L420.7 415.7L421.8 416.7L422.1 419.6L423.2 420.6L423.6 423.5L424.6 424.5L425.0 428.2L426.2 428.7L426.6 432.3L427.8 433.6L428.1 437.2L429.7 438.9L430.1 444.1L431.6 445.8L432.0 450.9L434.8 441.5L435.9 442.4L436.3 444.9L437.4 445.8L437.8 448.3L438.9 449.2L439.3 451.7L441.0 452.1L441.4 453.3L443.1 453.6L443.5 454.8L444.9 438.2L446.8 442.7L447.2 456.4L448.2 456.7L448.6 457.6L449.6 457.9L450.0 458.7L451.1 460.2L451.5 464.6L452.6 466.1L453.0 470.5L454.6 471.4L455.0 474.4L456.1 475.8L456.5 480.2L457.6 481.7L458.0 486.1L470.5 486.1L471.1 437.2L472.2 437.6L472.6 438.6L473.6 438.9L474.0 440.0L475.6 442.7L476.0 450.9L477.4 453.6L477.8 461.9L479.2 464.6L479.6 472.8L480.8 473.1L481.1 474.0L482.2 474.3L482.6 475.2L483.8 475.4L484.1 476.3L484.5 447.2L486.1 447.5L486.5 448.3L488.1 448.5L488.5 449.3L489.9 450.5L490.2 453.8L491.6 455.0L492.0 458.3L493.6 460.4L494.0 467.5L495.4 466.8L495.8 467.5L497.1 467.8L497.5 468.5L499.8 457.2L500.9 458.3L501.2 461.9L502.3 463.0L502.7 467.5L504.2 457.8L505.2 458.9L505.6 462.5L506.6 463.7L507.0 467.3L509.2 455.0L510.2 455.9L510.6 458.4L511.6 459.3L512.0 461.9L516.0 458.7L519.2 436.1L520.8 437.2L521.1 440.5L522.6 441.7L523.0 445.0L524.2 446.0L524.6 448.7L525.8 449.6L526.2 452.3L527.4 453.3L527.8 456.0L528.9 456.9L529.3 459.8L530.4 460.7L530.7 463.6L531.9 464.5L532.2 467.3L533.8 467.5L534.1 467.9L535.6 468.1L536.0 468.5L536.7 457.6L538.2 458.5L538.6 461.2L540.1 462.1L540.4 464.9L541.9 465.8L542.3 468.5L544.1 446.0L545.2 447.1L545.5 450.4L546.6 451.5L547.0 454.8L548.2 456.8L548.5 462.7L549.8 464.7L550.1 470.7L551.4 470.8L551.8 471.1L553.1 471.3L553.5 471.6L556.0 467.5L557.5 450.9L559.0 439.6L562.4 430.6L564.2 432.2L564.6 437.2L565.9 437.5L566.3 438.4L567.6 438.7L568.0 439.6L569.9 442.9L570.2 452.9L571.3 453.2L571.7 454.0L572.8 454.3L573.1 455.2L573.6 426.1L574.7 426.8L575.1 429.1L576.2 429.9L576.5 432.2L577.6 433.0L578.0 435.3L579.4 436.8L579.7 441.3L581.0 442.8L581.4 447.4L583.4 450.2L583.7 458.7L585.5 460.7L585.9 467.5L588.2 467.5L588.8 451.9L590.0 452.4L590.4 454.1L591.6 454.7L592.0 456.4L593.0 439.2L594.1 440.1L594.5 442.7L595.6 443.6L596.0 446.2L598.2 446.0L598.2 486.100L64.6 486.100Z" fill="#4a9ff5" fill-opacity="0.5"/><path d="M64.6 467.5L66.5 469.0L66.8 476.5L68.7 476.8L69.0 477.7L70.6 467.5L72.4 474.4L74.6 462.4L76.6 464.0L76.9 468.7L79.1 463.4L81.0 465.0L81.3 469.7L83.5 468.5L85.8 464.2L88.2 466.7L88.5 474.4L90.7 461.3L92.2 463.0L92.5 468.3L94.0 470.1L94.3 475.3L95.9 462.4L97.2 463.0L97.6 464.5L98.9 465.0L99.2 467.5L101.6 468.5L101.9 474.4L104.0 473.2L105.5 470.5L107.8 467.5L109.0 468.9L109.3 472.9L110.6 474.2L110.9 478.3L112.2 449.2L114.6 451.3L114.9 457.6L116.2 458.7L116.6 462.1L118.0 463.2L118.3 467.5L120.1 478.7L121.2 465.4L122.8 465.7L123.1 467.5L124.7 466.8L125.0 467.7L127.2 465.8L129.5 456.4L130.6 457.4L131.0 460.5L132.1 461.5L132.4 464.6L133.6 465.6L133.9 468.7L136.2 464.2L138.1 465.6L138.4 469.9L139.5 463.4L140.7 464.1L141.0 466.3L142.2 467.0L142.5 469.2L143.7 469.9L144.0 472.0L145.1 468.7L146.3 461.9L148.7 463.0L149.0 467.5L151.2 457.6L152.8 459.2L153.2 464.2L154.8 465.9L155.2 470.9L156.3 471.3L156.6 472.6L157.8 473.1L158.1 474.4L159.0 448.2L160.7 449.5L161.0 453.5L162.7 454.8L163.0 458.7L164.3 459.7L164.7 462.6L166.1 463.6L166.4 467.5L168.0 466.7L168.3 467.1L169.8 467.3L170.2 467.7L173.1 460.9L174.6 461.7L175.0 464.2L176.5 465.0L176.8 467.5L178.3 468.4L178.7 470.9L180.5 456.4L182.1 458.1L182.4 463.1L184.0 464.8L184.3 469.9L186.6 464.2L187.7 464.5L188.1 465.2L189.2 465.5L189.5 466.3L190.7 467.5L191.0 467.3L194.4 467.5L195.8 467.6L196.1 470.9L197.5 472.0L197.8 475.3L198.9 456.4L200.2 457.1L200.6 459.1L201.8 459.8L202.2 461.9L203.8 451.5L205.5 453.1L205.8 457.9L207.5 459.4L207.8 464.2L209.7 465.3L210.0 468.7L213.0 467.7L216.8 464.2L218.1 465.0L218.4 467.5L219.8 468.4L220.1 470.9L222.4 455.6L223.8 455.8L224.1 456.5L225.5 456.7L225.8 457.4L227.5 459.6L227.8 466.2L229.0 466.4L229.3 467.3L230.5 467.5L230.8 468.4L232.0 468.7L232.3 469.5L233.4 469.6L233.8 470.0L234.8 470.1L235.2 470.5L238.4 464.0L239.8 465.5L240.1 469.9L241.5 471.4L241.8 475.9L243.2 477.4L243.5 481.8L245.1 452.1L246.8 453.7L247.1 458.5L248.8 460.1L249.1 465.0L251.3 436.4L253.7 439.1L254.0 447.6L255.7 448.3L256.0 452.1L257.6 453.4L258.0 457.2L261.4 431.9L262.7 433.3L263.1 437.4L264.4 438.8L264.8 442.9L266.1 444.3L266.4 448.4L267.8 449.7L268.1 453.8L268.8 428.2L269.9 429.4L270.3 432.9L271.4 434.1L271.8 437.6L272.9 438.8L273.3 442.3L274.4 443.5L274.8 447.6L276.0 448.0L276.4 450.9L277.6 451.9L277.9 454.8L279.1 455.8L279.5 458.7L280.0 460.7L281.6 433.1L283.1 434.7L283.5 439.3L285.0 440.9L285.3 445.5L286.8 447.0L287.2 451.7L288.5 452.1L288.9 453.3L290.1 453.6L290.5 454.8L291.2 420.0L292.4 421.5L292.8 425.8L294.0 427.2L294.4 431.5L295.6 432.9L296.0 437.2L297.2 438.0L297.5 440.5L298.7 441.3L299.1 443.7L300.2 444.6L300.6 447.6L302.1 447.6L302.5 449.3L304.0 449.9L304.3 451.7L305.8 452.3L306.2 454.0L307.8 434.5L308.9 435.3L309.3 437.9L310.4 438.8L310.7 441.4L311.8 442.2L312.2 444.8L313.3 445.7L313.6 448.3L314.8 449.1L315.1 451.7L316.3 439.4L317.8 440.8L318.1 445.1L319.6 446.6L320.0 450.9L321.1 451.3L321.5 452.5L322.6 452.9L323.0 454.0L325.2 439.4L326.2 440.1L326.6 442.5L327.6 443.2L328.0 445.5L329.0 446.3L329.4 448.6L330.4 449.4L330.8 451.7L332.1 452.2L332.5 453.8L333.8 454.4L334.2 456.0L336.4 424.1L337.5 425.2L337.9 428.5L339.0 429.6L339.4 432.9L340.5 434.0L340.9 437.2L342.2 438.0L342.5 440.2L343.8 440.9L344.2 443.1L346.5 413.6L347.7 415.0L348.1 419.4L349.3 420.9L349.6 425.2L350.8 426.7L351.2 431.0L352.4 432.5L352.7 436.9L353.9 438.3L354.3 442.7L355.4 425.9L356.4 427.2L356.8 431.3L357.8 432.6L358.2 436.6L359.2 438.0L359.6 442.0L360.6 443.4L361.0 447.4L362.1 447.7L362.5 448.6L363.6 448.9L364.0 449.7L365.1 450.0L365.5 450.9L366.6 410.2L367.7 411.8L368.0 416.5L369.1 418.0L369.5 422.7L370.6 424.3L370.9 428.9L372.0 430.5L372.4 435.2L373.5 436.7L373.8 441.4L374.9 442.9L375.3 447.6L376.3 449.2L376.7 453.8L377.8 454.0L378.1 454.3L379.1 454.5L379.5 454.8L380.7 423.0L381.8 424.0L382.1 427.1L383.2 428.1L383.6 431.2L384.6 432.2L385.0 435.3L386.1 436.8L386.4 441.3L387.5 442.8L387.9 447.4L389.2 447.7L389.6 448.6L390.9 448.9L391.3 449.7L392.6 450.0L393.0 450.9L394.6 434.9L396.2 436.4L396.6 440.9L398.1 442.5L398.5 447.6L400.1 447.0L400.4 447.2L402.0 447.2L402.4 447.4L403.8 448.1L404.2 450.1L405.6 450.8L406.0 452.9L407.4 432.7L409.0 445.0L411.1 447.5L411.5 454.8L412.7 455.2L413.0 456.3L414.2 456.7L414.6 457.8L415.7 458.1L416.1 459.2L417.2 459.6L417.6 460.7L419.5 462.6L420.7 415.7L421.8 416.7L422.1 419.6L423.2 420.6L423.6 423.5L424.6 424.5L425.0 428.2L426.2 428.7L426.6 432.3L427.8 433.6L428.1 437.2L429.7 438.9L430.1 444.1L431.6 445.8L432.0 450.9L434.8 441.5L435.9 442.4L436.3 444.9L437.4 445.8L437.8 448.3L438.9 449.2L439.3 451.7L441.0 452.1L441.4 453.3L443.1 453.6L443.5 454.8L444.9 438.2L446.8 442.7L447.2 456.4L448.2 456.7L448.6 457.6L449.6 457.9L450.0 458.7L451.1 460.2L451.5 464.6L452.6 466.1L453.0 470.5L454.6 471.4L455.0 474.4L456.1 475.8L456.5 480.2L457.6 481.7L458.0 486.1L470.5 486.1L471.1 437.2L472.2 437.6L472.6 438.6L473.6 438.9L474.0 440.0L475.6 442.7L476.0 450.9L477.4 453.6L477.8 461.9L479.2 464.6L479.6 472.8L480.8 473.1L481.1 474.0L482.2 474.3L482.6 475.2L483.8 475.4L484.1 476.3L484.5 447.2L486.1 447.5L486.5 448.3L488.1 448.5L488.5 449.3L489.9 450.5L490.2 453.8L491.6 455.0L492.0 458.3L493.6 460.4L494.0 467.5L495.4 466.8L495.8 467.5L497.1 467.8L497.5 468.5L499.8 457.2L500.9 458.3L501.2 461.9L502.3 463.0L502.7 467.5L504.2 457.8L505.2 458.9L505.6 462.5L506.6 463.7L507.0 467.3L509.2 455.0L510.2 455.9L510.6 458.4L511.6 459.3L512.0 461.9L516.0 458.7L519.2 436.1L520.8 437.2L521.1 440.5L522.6 441.7L523.0 445.0L524.2 446.0L524.6 448.7L525.8 449.6L526.2 452.3L527.4 453.3L527.8 456.0L528.9 456.9L529.3 459.8L530.4 460.7L530.7 463.6L531.9 464.5L532.2 467.3L533.8 467.5L534.1 467.9L535.6 468.1L536.0 468.5L536.7 457.6L538.2 458.5L538.6 461.2L540.1 462.1L540.4 464.9L541.9 465.8L542.3 468.5L544.1 446.0L545.2 447.1L545.5 450.4L546.6 451.5L547.0 454.8L548.2 456.8L548.5 462.7L549.8 464.7L550.1 470.7L551.4 470.8L551.8 471.1L553.1 471.3L553.5 471.6L556.0 467.5L557.5 450.9L559.0 439.6L562.4 430.6L564.2 432.2L564.6 437.2L565.9 437.5L566.3 438.4L567.6 438.7L568.0 439.6L569.9 442.9L570.2 452.9L571.3 453.2L571.7 454.0L572.8 454.3L573.1 455.2L573.6 426.1L574.7 426.8L575.1 429.1L576.2 429.9L576.5 432.2L577.6 433.0L578.0 435.3L579.4 436.8L579.7 441.3L581.0 442.8L581.4 447.4L583.4 450.2L583.7 458.7L585.5 460.7L585.9 467.5L588.2 467.5L588.8 451.9L590.0 452.4L590.4 454.1L591.6 454.7L592.0 456.4L593.0 439.2L594.1 440.1L594.5 442.7L595.6 443.6L596.0 446.2L598.2 446.0" fill="none" stroke="#4a9ff5" stroke-width="1" stroke-linejoin="round"/><path d="M596.2 446.200H707.200V486.100H596.200Z" fill="#6ac2f3" fill-opacity="0.400"/><path d="M596.2 446.200H707.200" fill="none" stroke="#62c0f5" stroke-width="1" stroke-opacity="0.8"/><rect x="60.0" y="431.5" width="5" height="54.6" fill="#f0882b" fill-opacity="0.880"/><path d="M60.0 467.50h5" stroke="#fff" stroke-opacity="0.750" stroke-width="1"/><path d="M60.0 447.60h5" stroke="#fff" stroke-opacity="0.750" stroke-width="1"/><rect x="81.2" y="415.8" width="5" height="70.3" fill="#f0882b" fill-opacity="0.880"/><path d="M83.5 419.3V464.4" stroke="#fff" stroke-opacity="0.900" stroke-width="1"/><path d="M81.2 447.60h5" stroke="#fff" stroke-opacity="0.750" stroke-width="1"/><path d="M81.2 428.20h5" stroke="#fff" stroke-opacity="0.750" stroke-width="1"/><rect x="103.1" y="421.4" width="5" height="64.7" fill="#f0882b" fill-opacity="0.880"/><path d="M103.1 467.50h5" stroke="#fff" stroke-opacity="0.750" stroke-width="1"/><path d="M103.1 447.60h5" stroke="#fff" stroke-opacity="0.750" stroke-width="1"/><path d="M103.1 428.20h5" stroke="#fff" stroke-opacity="0.750" stroke-width="1"/><rect x="124.9" y="421.4" width="5" height="64.7" fill="#f0882b" fill-opacity="0.880"/><path d="M126.5 424.9V456.6" stroke="#fff" stroke-opacity="0.900" stroke-width="1"/><path d="M124.9 447.60h5" stroke="#fff" stroke-opacity="0.750" stroke-width="1"/><path d="M124.9 428.20h5" stroke="#fff" stroke-opacity="0.750" stroke-width="1"/><rect x="146.1" y="425.9" width="5" height="60.2" fill="#f0882b" fill-opacity="0.880"/><path d="M146.1 447.60h5" stroke="#fff" stroke-opacity="0.750" stroke-width="1"/><rect x="168.0" y="424.8" width="5" height="61.3" fill="#f0882b" fill-opacity="0.880"/><path d="M170.5 428.3V462.3" stroke="#fff" stroke-opacity="0.900" stroke-width="1"/><path d="M168.0 447.60h5" stroke="#fff" stroke-opacity="0.750" stroke-width="1"/><rect x="189.2" y="413.6" width="5" height="72.5" fill="#f0882b" fill-opacity="0.880"/><path d="M189.2 467.50h5" stroke="#fff" stroke-opacity="0.750" stroke-width="1"/><path d="M189.2 447.60h5" stroke="#fff" stroke-opacity="0.750" stroke-width="1"/><path d="M189.2 428.20h5" stroke="#fff" stroke-opacity="0.750" stroke-width="1"/><rect x="211.1" y="413.6" width="5" height="72.5" fill="#f0882b" fill-opacity="0.880"/><path d="M213.5 417.1V465.3" stroke="#fff" stroke-opacity="0.900" stroke-width="1"/><path d="M211.1 447.60h5" stroke="#fff" stroke-opacity="0.750" stroke-width="1"/><path d="M211.1 428.20h5" stroke="#fff" stroke-opacity="0.750" stroke-width="1"/><rect x="232.9" y="424.8" width="5" height="61.3" fill="#f0882b" fill-opacity="0.880"/><path d="M232.9 447.60h5" stroke="#fff" stroke-opacity="0.750" stroke-width="1"/><rect x="252.7" y="416.5" width="5" height="69.6" fill="#f0882b" fill-opacity="0.880"/><path d="M254.5 420.0V438.6" stroke="#fff" stroke-opacity="0.900" stroke-width="1"/><path d="M252.7 428.20h5" stroke="#fff" stroke-opacity="0.750" stroke-width="1"/><rect x="274.6" y="408.0" width="5" height="78.1" fill="#f0882b" fill-opacity="0.880"/><path d="M274.6 447.60h5" stroke="#fff" stroke-opacity="0.750" stroke-width="1"/><path d="M274.6 428.20h5" stroke="#fff" stroke-opacity="0.750" stroke-width="1"/><rect x="295.8" y="416.5" width="5" height="69.6" fill="#f0882b" fill-opacity="0.880"/><path d="M297.5 420.0V437.4" stroke="#fff" stroke-opacity="0.900" stroke-width="1"/><path d="M295.8 428.20h5" stroke="#fff" stroke-opacity="0.750" stroke-width="1"/><rect x="317.7" y="409.1" width="5" height="77.0" fill="#f0882b" fill-opacity="0.880"/><path d="M317.7 428.20h5" stroke="#fff" stroke-opacity="0.750" stroke-width="1"/><rect x="338.8" y="396.8" width="5" height="89.3" fill="#f0882b" fill-opacity="0.880"/><path d="M340.5 400.3V432.2" stroke="#fff" stroke-opacity="0.900" stroke-width="1"/><path d="M338.8 428.20h5" stroke="#fff" stroke-opacity="0.750" stroke-width="1"/><path d="M338.8 408.40h5" stroke="#fff" stroke-opacity="0.750" stroke-width="1"/><rect x="360.7" y="408.7" width="5" height="77.4" fill="#f0882b" fill-opacity="0.880"/><path d="M360.7 447.60h5" stroke="#fff" stroke-opacity="0.750" stroke-width="1"/><path d="M360.7 428.20h5" stroke="#fff" stroke-opacity="0.750" stroke-width="1"/><rect x="382.6" y="408.0" width="5" height="78.1" fill="#f0882b" fill-opacity="0.880"/><path d="M384.5 411.5V428.0" stroke="#fff" stroke-opacity="0.900" stroke-width="1"/><path d="M382.6 428.20h5" stroke="#fff" stroke-opacity="0.750" stroke-width="1"/><rect x="403.8" y="410.9" width="5" height="75.2" fill="#f0882b" fill-opacity="0.880"/><path d="M403.8 428.20h5" stroke="#fff" stroke-opacity="0.750" stroke-width="1"/><rect x="425.7" y="427.5" width="5" height="58.6" fill="#f0882b" fill-opacity="0.880"/><rect x="446.8" y="464.6" width="5" height="21.5" fill="#f0882b" fill-opacity="0.880"/><rect x="468.7" y="412.0" width="5" height="74.1" fill="#f0882b" fill-opacity="0.880"/><path d="M470.5 415.5V437.3" stroke="#fff" stroke-opacity="0.900" stroke-width="1"/><path d="M468.7 428.20h5" stroke="#fff" stroke-opacity="0.750" stroke-width="1"/><rect x="490.6" y="436.4" width="5" height="49.7" fill="#f0882b" fill-opacity="0.880"/><path d="M490.6 447.60h5" stroke="#fff" stroke-opacity="0.750" stroke-width="1"/><rect x="510.4" y="421.0" width="5" height="65.1" fill="#f0882b" fill-opacity="0.880"/><path d="M512.5 424.5V458.7" stroke="#fff" stroke-opacity="0.900" stroke-width="1"/><path d="M510.4 447.60h5" stroke="#fff" stroke-opacity="0.750" stroke-width="1"/><path d="M510.4 428.20h5" stroke="#fff" stroke-opacity="0.750" stroke-width="1"/><rect x="532.2" y="425.9" width="5" height="60.2" fill="#f0882b" fill-opacity="0.880"/><path d="M532.2 447.60h5" stroke="#fff" stroke-opacity="0.750" stroke-width="1"/><rect x="553.4" y="428.1" width="5" height="58.0" fill="#f0882b" fill-opacity="0.880"/><path d="M555.5 431.6V447.7" stroke="#fff" stroke-opacity="0.900" stroke-width="1"/><path d="M553.4 447.60h5" stroke="#fff" stroke-opacity="0.750" stroke-width="1"/><rect x="575.3" y="428.1" width="5" height="58.0" fill="#f0882b" fill-opacity="0.880"/><rect x="596.0" y="424.800" width="6" height="61.300" fill="#f0b92f" fill-opacity="0.860"/><rect x="617.9" y="424.800" width="6" height="61.300" fill="#f0b92f" fill-opacity="0.860"/><rect x="639.7" y="424.800" width="6" height="61.300" fill="#f0b92f" fill-opacity="0.860"/><rect x="660.9" y="424.800" width="6" height="61.300" fill="#f0b92f" fill-opacity="0.860"/><rect x="682.8" y="424.800" width="6" height="61.300" fill="#f0b92f" fill-opacity="0.860"/><rect x="704.0" y="424.800" width="6" height="61.300" fill="#f0b92f" fill-opacity="0.860"/><path d="M707.600 448V485" stroke="#fff" stroke-width="0.900"/><rect x="575.5" y="484.300" width="5" height="1.800" fill="#f0b92f"/><path d="M597.100 477.550H704" stroke="#4a9ff5" stroke-width="2" stroke-dasharray="7.700 6.400"/><path d="M598.800 485.300H707" stroke="#555" stroke-opacity="0.850" stroke-width="1" stroke-dasharray="3.500 2.600"/><path d="M62.5 427.5L66.5 431.5L62.5 435.5L58.5 431.5Z" fill="#994a05"/><path d="M83.7 411.8L87.7 415.8L83.7 419.8L79.7 415.8Z" fill="#994a05"/><path d="M105.6 417.4L109.6 421.4L105.6 425.4L101.6 421.4Z" fill="#994a05"/><path d="M127.4 417.4L131.4 421.4L127.4 425.4L123.4 421.4Z" fill="#994a05"/><path d="M148.6 421.9L152.6 425.9L148.6 429.9L144.6 425.9Z" fill="#994a05"/><path d="M170.5 420.8L174.5 424.8L170.5 428.8L166.5 424.8Z" fill="#994a05"/><path d="M191.7 409.6L195.7 413.6L191.7 417.6L187.7 413.6Z" fill="#994a05"/><path d="M213.6 409.6L217.6 413.6L213.6 417.6L209.6 413.6Z" fill="#994a05"/><path d="M235.4 420.8L239.4 424.8L235.4 428.8L231.4 424.8Z" fill="#994a05"/><path d="M255.2 412.5L259.2 416.5L255.2 420.5L251.2 416.5Z" fill="#994a05"/><path d="M277.1 404.0L281.1 408.0L277.1 412.0L273.1 408.0Z" fill="#994a05"/><path d="M298.3 412.5L302.3 416.5L298.3 420.5L294.3 416.5Z" fill="#994a05"/><path d="M320.2 405.1L324.2 409.1L320.2 413.1L316.2 409.1Z" fill="#994a05"/><path d="M341.3 392.8L345.3 396.8L341.3 400.8L337.3 396.8Z" fill="#994a05"/><path d="M363.2 404.7L367.2 408.7L363.2 412.7L359.2 408.7Z" fill="#994a05"/><path d="M385.1 404.0L389.1 408.0L385.1 412.0L381.1 408.0Z" fill="#994a05"/><path d="M406.3 406.9L410.3 410.9L406.3 414.9L402.3 410.9Z" fill="#994a05"/><path d="M428.2 423.5L432.2 427.5L428.2 431.5L424.2 427.5Z" fill="#994a05"/><path d="M449.3 460.6L453.3 464.6L449.3 468.6L445.3 464.6Z" fill="#994a05"/><path d="M471.2 408.0L475.2 412.0L471.2 416.0L467.2 412.0Z" fill="#994a05"/><path d="M493.1 432.4L497.1 436.4L493.1 440.4L489.1 436.4Z" fill="#994a05"/><path d="M512.9 417.0L516.9 421.0L512.9 425.0L508.9 421.0Z" fill="#994a05"/><path d="M534.7 421.9L538.7 425.9L534.7 429.9L530.7 425.9Z" fill="#994a05"/><path d="M555.9 424.1L559.9 428.1L555.9 432.1L551.9 428.1Z" fill="#994a05"/><path d="M577.8 424.1L581.8 428.1L577.8 432.1L573.8 428.1Z" fill="#994a05"/><text x="41.200" y="490.7" text-anchor="end" font-size="11" fill="#555">0</text><text x="41.200" y="472.1" text-anchor="end" font-size="11" fill="#555">500</text><text x="41.200" y="452.2" text-anchor="end" font-size="11" fill="#555">1000</text><text x="41.200" y="432.8" text-anchor="end" font-size="11" fill="#555">1500</text><text x="41.200" y="413.0" text-anchor="end" font-size="11" fill="#555">2000</text><text x="41.200" y="393.0" text-anchor="end" font-size="11" fill="#555">2500</text><text transform="translate(80.8 501) rotate(45)" font-size="12" fill="#666" letter-spacing="-0.35">Jul, '17</text><text transform="translate(123.8 501) rotate(45)" font-size="12" fill="#666" letter-spacing="-0.35">Sep, '17</text><text transform="translate(167.8 501) rotate(45)" font-size="12" fill="#666" letter-spacing="-0.35">Nov, '17</text><text transform="translate(210.8 501) rotate(45)" font-size="12" fill="#666" letter-spacing="-0.35">Jan, '18</text><text transform="translate(251.8 501) rotate(45)" font-size="12" fill="#666" letter-spacing="-0.35">Mar, '18</text><text transform="translate(294.8 501) rotate(45)" font-size="12" fill="#666" letter-spacing="-0.35">May, '18</text><text transform="translate(337.8 501) rotate(45)" font-size="12" fill="#666" letter-spacing="-0.35">Jul, '18</text><text transform="translate(381.8 501) rotate(45)" font-size="12" fill="#666" letter-spacing="-0.35">Sep, '18</text><text transform="translate(424.8 501) rotate(45)" font-size="12" fill="#666" letter-spacing="-0.35">Nov, '18</text><text transform="translate(467.8 501) rotate(45)" font-size="12" fill="#666" letter-spacing="-0.35">Jan, '19</text><text transform="translate(509.8 501) rotate(45)" font-size="12" fill="#666" letter-spacing="-0.35">Mar, '19</text><text transform="translate(552.8 501) rotate(45)" font-size="12" fill="#666" letter-spacing="-0.35">May, '19</text><text transform="translate(595.8 501) rotate(45)" font-size="12" fill="#666" letter-spacing="-0.35">Jul, '19</text><text transform="translate(639.8 501) rotate(45)" font-size="12" fill="#666" letter-spacing="-0.35">Sep, '19</text><text transform="translate(682.8 501) rotate(45)" font-size="12" fill="#666" letter-spacing="-0.35">Nov, '19</text><path d="M290.700 456.500H367l6-6 6 6H457.300a3 3 0 0 1 3 3V499a3 3 0 0 1-3 3H290.700a3 3 0 0 1-3-3V459.500a3 3 0 0 1 3-3Z" transform="translate(1 1.500)" fill="none" stroke="#000" stroke-opacity="0.060" stroke-width="3"/><path d="M290.700 456.500H367l6-6 6 6H457.300a3 3 0 0 1 3 3V499a3 3 0 0 1-3 3H290.700a3 3 0 0 1-3-3V459.500a3 3 0 0 1 3-3Z" transform="translate(1 1.500)" fill="none" stroke="#000" stroke-opacity="0.100" stroke-width="1"/><path d="M290.700 456.500H367l6-6 6 6H457.300a3 3 0 0 1 3 3V499a3 3 0 0 1-3 3H290.700a3 3 0 0 1-3-3V459.500a3 3 0 0 1 3-3Z" fill="#f0f6fd" fill-opacity="0.800" stroke="#7cb8f2" stroke-width="1"/><rect x="295.8" y="457.0" width="5" height="29.1" fill="#fff" fill-opacity="0.960"/><rect x="317.7" y="457.0" width="5" height="29.1" fill="#fff" fill-opacity="0.960"/><rect x="338.8" y="457.0" width="5" height="29.1" fill="#fff" fill-opacity="0.960"/><rect x="360.7" y="457.0" width="5" height="29.1" fill="#fff" fill-opacity="0.960"/><rect x="382.6" y="457.0" width="5" height="29.1" fill="#fff" fill-opacity="0.960"/><rect x="403.8" y="457.0" width="5" height="29.1" fill="#fff" fill-opacity="0.960"/><rect x="425.7" y="457.0" width="5" height="29.1" fill="#fff" fill-opacity="0.960"/><text x="295" y="475.500" font-size="10" fill="#3c3c3c" textLength="156" lengthAdjust="spacingAndGlyphs">Wednesday, 15 August 2018, w33</text><circle cx="298.500" cy="487.500" r="2.300" fill="#4a9ff5"/><text x="305" y="490.700" font-size="12" fill="#333" textLength="34">Stock:</text><text x="342" y="490.700" font-size="12" font-weight="700" fill="#333" textLength="31">1 184</text><path d="M742 398.6L746 402.6L742 406.6L738 402.6Z" fill="#994a05"/><text x="755.400" y="406.7" font-size="13" font-weight="700" fill="#333" textLength="81.9" lengthAdjust="spacingAndGlyphs">Sale - Original</text><circle cx="742" cy="419.6" r="6" fill="#f5841f"/><text x="755.400" y="423.7" font-size="13" font-weight="700" fill="#333" textLength="87.1" lengthAdjust="spacingAndGlyphs">Sale - Adjusted</text><circle cx="742" cy="436.7" r="6" fill="#f2b82a"/><text x="755.400" y="440.8" font-size="13" font-weight="700" fill="#333" textLength="85.6" lengthAdjust="spacingAndGlyphs">Sale - Forecast</text><circle cx="742" cy="453.7" r="6" fill="#4a9ff8"/><text x="755.400" y="457.8" font-size="13" font-weight="700" fill="#333" textLength="32.6" lengthAdjust="spacingAndGlyphs">Stock</text><circle cx="742" cy="470.7" r="6" fill="#62c0f5"/><text x="755.400" y="474.8" font-size="13" font-weight="700" fill="#333" textLength="95.1" lengthAdjust="spacingAndGlyphs">Estimated stock</text><path d="M734 487.8H750" stroke="#4a9ff5" stroke-width="2" stroke-dasharray="8 6 2 6"/><text x="755.400" y="491.9" font-size="13" font-weight="700" fill="#333" textLength="173.3" lengthAdjust="spacingAndGlyphs">Safety Stock for Order Period</text><path d="M734 504.8H750" stroke="#777" stroke-width="1.300" stroke-dasharray="4 2.500"/><text x="755.400" y="508.9" font-size="13" font-weight="700" fill="#333" textLength="124.0" lengthAdjust="spacingAndGlyphs">Minimum stock level</text></svg></div><div style="left:963.3px;top:10.4px;width:29.3px;height:29.2px;background:#fff;border:1px solid #eceef0;border-radius:4px;box-sizing:border-box;"></div>
<div style="left:963.3px;top:44.3px;width:29.3px;height:29.8px;background:#d3d9e0;border:1px solid #bac2cb;border-radius:4px;box-sizing:border-box;"></div>
<div style="left:963.3px;top:78.3px;width:29.3px;height:29.2px;background:#fff;border:1px solid #eceef0;border-radius:4px;box-sizing:border-box;"></div>
<div style="left:971.4px;top:19.5px"><svg width="12.500" height="12.700" viewBox="0 0 14 14" style="position:absolute;left:0;top:0"><path d="M0.500 13.500l.7-3.600 7.200-7.200 2.900 2.900-7.200 7.200z" fill="#212529"/><path d="M9.300 1.800l1.200-1.200a1 1 0 0 1 1.400 0l1.500 1.500a1 1 0 0 1 0 1.400l-1.200 1.200z" fill="#212529"/></svg></div><div style="left:976px;top:53px"><svg width="4" height="12" viewBox="0 0 4 12" style="position:absolute;left:0;top:0"><rect x="0.500" y="0" width="3" height="3" fill="#212529"/><rect x="0.500" y="4.500" width="3" height="3" fill="#212529"/><rect x="0.500" y="9" width="3" height="3" fill="#212529"/></svg></div><div style="left:971.5px;top:87.9px"><svg width="12.600" height="12.600" viewBox="0 0 13 13" style="position:absolute;left:0;top:0"><circle cx="6.500" cy="6.500" r="6.500" fill="#212529"/><rect x="2.800" y="5.300" width="7.400" height="2.400" fill="#fff"/></svg></div></div>
</div>
</body></html>
